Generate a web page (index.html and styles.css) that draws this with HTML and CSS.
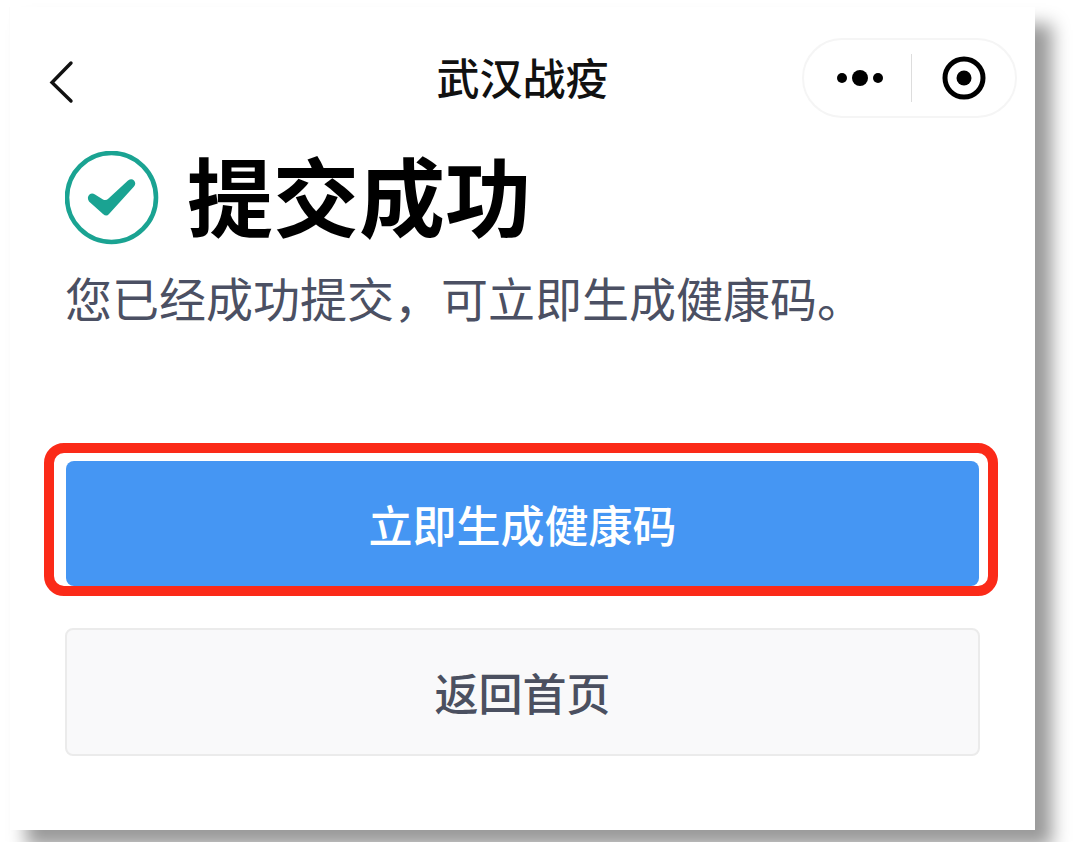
FILE: index.html
```html
<!DOCTYPE html>
<html lang="zh-CN">
<head>
<meta charset="utf-8">
<meta name="viewport" content="width=device-width, initial-scale=1">
<title>武汉战疫</title>
<link rel="stylesheet" href="styles.css">
</head>
<body>
<div class="card">
  <header class="nav">
    <button class="nav-back" type="button" aria-label="返回">
      <svg width="26" height="44" viewBox="0 0 26 44" fill="none" stroke="#111" stroke-width="3.4" stroke-linecap="round"><path d="M23 3 4 22.500 23 41"/></svg>
    </button>
    <h1 class="nav-title">武汉战疫</h1>
    <div class="capsule">
      <button class="capsule-button" type="button" aria-label="更多">
        <svg width="48" height="18" viewBox="0 0 48 18"><circle cx="6" cy="9" r="5"/><circle cx="24" cy="9" r="8"/><circle cx="42" cy="9" r="5"/></svg>
      </button>
      <button class="capsule-button capsule-close" type="button" aria-label="关闭">
        <svg width="44" height="44" viewBox="0 0 44 44"><circle cx="22" cy="22" r="19" fill="none" stroke="#000" stroke-width="5"/><circle cx="22" cy="22" r="7.500"/></svg>
      </button>
    </div>
  </header>
  <main class="content">
    <div class="status">
      <svg class="status-icon" width="94" height="94" viewBox="0 0 94 94"><circle cx="46.500" cy="46.500" r="44.500" fill="none" stroke="#1aa392" stroke-width="4.600"/><path d="M24.500 43.500Q27 41.500 30 43.500L38 48.500Q41 50 43.500 47.500L63 29.500Q66.500 27 69 29.500Q71.500 32.500 69 35.500L44 63Q41.500 66 38 63L24 50.500Q21.500 46.500 24.500 43.500Z" fill="#1aa392"/></svg>
      <h2 class="status-title">提交成功</h2>
    </div>
    <p class="message">您已经成功提交，可立即生成健康码。</p>
    <div class="highlight">
      <button class="button button-primary" type="button">立即生成健康码</button>
    </div>
    <button class="button button-secondary" type="button">返回首页</button>
  </main>
</div>
</body>
</html>
```
FILE: styles.css
```css
* {
  box-sizing: border-box;
}

body {
  margin: 0;
  padding: 7px 45px 12px 9px;
  background: #fff;
  font-family: "Noto Sans CJK SC", sans-serif;
  overflow: hidden;
}

button {
  margin: 0;
  padding: 0;
  border: 0;
  background: none;
  font-family: inherit;
  cursor: pointer;
}

svg {
  display: block;
}

.card {
  padding: 31px 0 74px;
  border-left: 1px solid #fcfcfc;
  background: #fff;
  box-shadow: 17px 17px 17px rgba(0, 0, 0, 0.4);
}

.nav {
  display: grid;
  grid-template-columns: 1fr auto 1fr;
  align-items: center;
  padding: 0 18px 0 38px;
}

.nav-back {
  justify-self: start;
  padding-top: 8px;
}

.nav-title {
  margin: 0;
  padding: 0 20px 4px 0;
  font-size: 43px;
  font-weight: 500;
  line-height: 76px;
  color: #111;
}

.capsule {
  display: flex;
  justify-self: end;
  align-items: center;
  width: 215px;
  height: 80px;
  border: 2px solid #f5f5f5;
  border-radius: 40px;
}

.capsule-button {
  display: flex;
  flex: 1;
  align-items: center;
  justify-content: center;
  height: 48px;
  padding-left: 4px;
}

.capsule-close {
  border-left: 1px solid #ddd;
  padding: 0;
}

.content {
  padding: 33px 55px 0;
}

.status {
  display: flex;
  align-items: center;
  gap: 28px;
}

.status-title {
  margin: 0;
  padding-bottom: 8px;
  font-size: 86px;
  font-weight: 700;
  line-height: 86px;
  color: #000;
}

.message {
  margin: 16px 0 128px;
  font-size: 47px;
  line-height: 72px;
  color: #4b5063;
}

.highlight {
  position: relative;
  padding: 0 1px;
  margin-bottom: 42px;
}

.highlight::after {
  content: "";
  position: absolute;
  inset: -18px -18px -10px -21px;
  border: 10px solid #fb2a18;
  border-radius: 20px;
  pointer-events: none;
}

.button {
  display: block;
  width: 100%;
  border-radius: 8px;
  font-size: 44px;
  font-weight: 500;
}

.button-primary {
  height: 125px;
  background: #4596f3;
  color: #fff;
}

.button-secondary {
  height: 128px;
  border: 2px solid #ebebeb;
  background: #f9f9fa;
  color: #4b5060;
}
```
